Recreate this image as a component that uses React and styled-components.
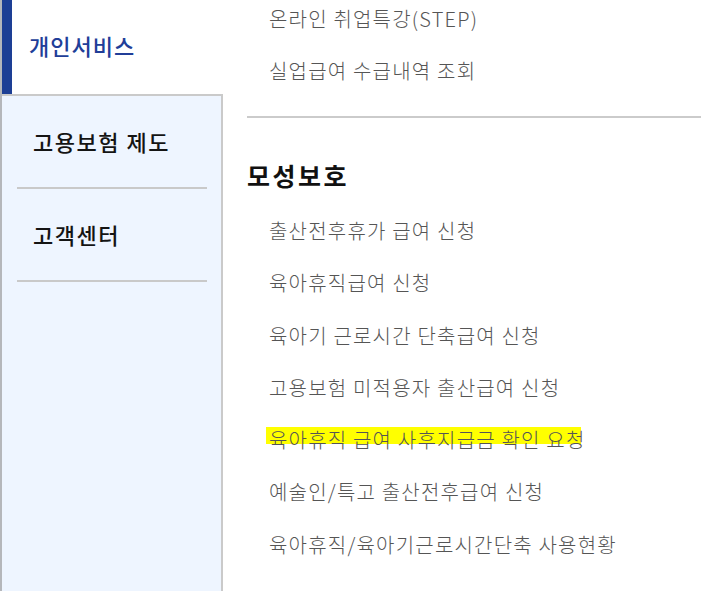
import React from 'react';
import styled, { createGlobalStyle } from 'styled-components';

const GlobalStyle = createGlobalStyle`
  html, body {
    margin: 0;
    padding: 0;
    background: #ffffff;
    overflow: hidden;
  }
  body {
    font-family: "Noto Sans CJK KR", "Noto Sans", sans-serif;
  }
`;

const Page = styled.div`
  display: flex;
  height: 591px;
  width: 701px;
  border-left: 2px solid #b5b7bb;
  box-sizing: border-box;
  background: #fff;
`;

const Sidebar = styled.div`
  width: 221px;
  flex-shrink: 0;
  display: flex;
  flex-direction: column;
`;

const TabRow = styled.div`
  display: flex;
  height: 94px;
`;

const TabMarker = styled.div`
  width: 10px;
  background: #1d3f95;
`;

const ActiveTab = styled.div`
  flex: 1;
  background: #fff;
  display: flex;
  align-items: center;
  padding-left: 17px;
  padding-bottom: 4px;
  font-size: 22px;
  font-weight: 500;
  color: #213e98;
  letter-spacing: 1px;
`;

const Panel = styled.div`
  flex: 1;
  background: #eef5ff;
  border-top: 2px solid #cacaca;
  border-right: 2px solid #cacaca;
  padding: 0 14px 0 15px;
`;

const PanelItem = styled.div`
  height: 93px;
  display: flex;
  align-items: center;
  padding-left: 16px;
  padding-bottom: 2px;
  box-sizing: border-box;
  font-size: 22px;
  font-weight: 500;
  color: #141414;
  letter-spacing: 1.5px;
  border-bottom: 2px solid #c9c9c9;
`;

const Content = styled.div`
  flex: 1;
  padding: 6px 0 0 24px;
  display: flex;
  flex-direction: column;
`;

const MenuList = styled.div`
  display: flex;
  flex-direction: column;
  gap: ${p => p.$gap}px;
  padding-left: 22px;
`;

const MenuItem = styled.div`
  line-height: 26px;
  font-size: 20px;
  font-weight: 300;
  color: #555;
  letter-spacing: 1.2px;
  white-space: nowrap;
`;

const Highlight = styled.span`
  margin-left: -3px;
  padding-left: 3px;
  background-image: linear-gradient(#ffff00, #ffff00);
  background-repeat: no-repeat;
  background-size: calc(100% - 4px) 17px;
  background-position: 0 2px;
`;

const Divider = styled.hr`
  border: none;
  border-top: 2px solid #cbcbcb;
  margin: 32px -30px 0 0;
`;

const SectionTitle = styled.h2`
  margin: 42px 0 28px;
  font-size: 25px;
  line-height: 30px;
  font-weight: 700;
  color: #111;
  letter-spacing: 2.5px;
`;

const topItems = ['온라인 취업특강(STEP)', '실업급여 수급내역 조회'];

const maternityItems = [
  '출산전후휴가 급여 신청',
  '육아휴직급여 신청',
  '육아기 근로시간 단축급여 신청',
  '고용보험 미적용자 출산급여 신청',
  '육아휴직 급여 사후지급금 확인 요청',
  '예술인/특고 출산전후급여 신청',
  '육아휴직/육아기근로시간단축 사용현황',
];

export default function App() {
  return (
    <>
      <GlobalStyle />
      <Page>
        <Sidebar>
          <TabRow>
            <TabMarker />
            <ActiveTab>개인서비스</ActiveTab>
          </TabRow>
          <Panel>
            <PanelItem>고용보험 제도</PanelItem>
            <PanelItem>고객센터</PanelItem>
          </Panel>
        </Sidebar>
        <Content>
          <MenuList $gap={26}>
            {topItems.map(item => (
              <MenuItem key={item}>{item}</MenuItem>
            ))}
          </MenuList>
          <Divider />
          <SectionTitle>모성보호</SectionTitle>
          <MenuList $gap={26.3}>
            {maternityItems.map((item, i) => (
              <MenuItem key={item}>
                {i === 4 ? <Highlight>{item}</Highlight> : item}
              </MenuItem>
            ))}
          </MenuList>
        </Content>
      </Page>
    </>
  );
}
